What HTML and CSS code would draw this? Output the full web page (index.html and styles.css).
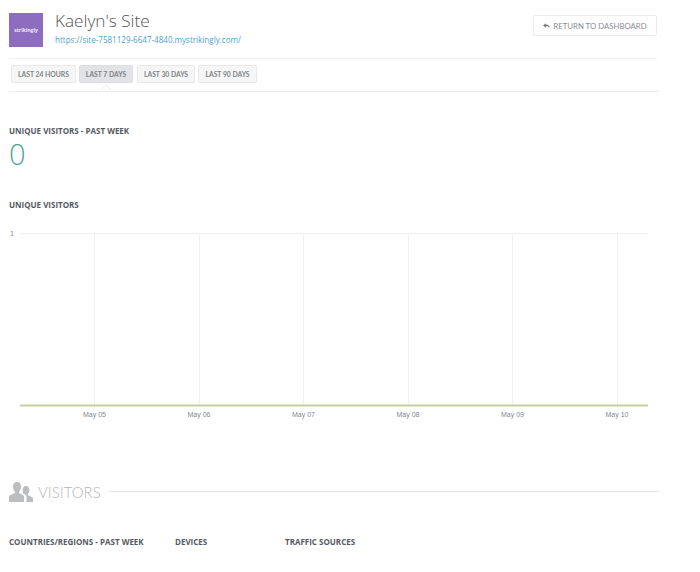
FILE: index.html
```html
<!DOCTYPE html>
<html lang="en">
<head>
    <meta charset="UTF-8">
    <title>Kaelyn's Site</title>
    <link rel="stylesheet" href="styles.css">
</head>
<body>
    <div class="container">
        <div class="site-header">
            <div class="logo">strikingly</div>
            <div class="site-info">
                <h1>Kaelyn's Site</h1>
                <a class="site-link" href="#">https://site-7581129-6647-4840.mystrikingly.com/</a>
            </div>
            <a class="return-btn" href="#">
                <svg class="return-icon" viewBox="0 0 10 8"><path d="M4 0 0 3.2 4 6.4V4.5c2.6 0 4.4.6 5.6 3C9.400 4.200 7.400 2 4 1.900z"/></svg>
                RETURN TO DASHBOARD
            </a>
        </div>

        <div class="tabs">
            <button class="tab tab-24">LAST 24 HOURS</button>
            <button class="tab tab-7 active">LAST 7 DAYS</button>
            <button class="tab tab-30">LAST 30 DAYS</button>
            <button class="tab tab-90">LAST 90 DAYS</button>
        </div>

        <h3 class="label label-week">UNIQUE VISITORS - PAST WEEK</h3>
        <div class="big-number">0</div>

        <h3 class="label label-chart">UNIQUE VISITORS</h3>
        <svg class="chart" width="650" height="200" viewBox="0 0 650 200">
            <text class="axis-y" x="10" y="15">1</text>
            <line class="grid" x1="20" y1="12.500" x2="648" y2="12.500"/>
            <line class="grid" x1="94.500" y1="12" x2="94.500" y2="184"/>
            <line class="grid" x1="199.500" y1="12" x2="199.500" y2="184"/>
            <line class="grid" x1="303.500" y1="12" x2="303.500" y2="184"/>
            <line class="grid" x1="408.500" y1="12" x2="408.500" y2="184"/>
            <line class="grid" x1="512.500" y1="12" x2="512.500" y2="184"/>
            <line class="grid" x1="617.500" y1="12" x2="617.500" y2="184"/>
            <line class="series" x1="20" y1="184.500" x2="648" y2="184.500"/>
            <text class="axis-x" x="94.500" y="196">May 05</text>
            <text class="axis-x" x="199" y="196">May 06</text>
            <text class="axis-x" x="303.500" y="196">May 07</text>
            <text class="axis-x" x="408" y="196">May 08</text>
            <text class="axis-x" x="512.500" y="196">May 09</text>
            <text class="axis-x" x="617" y="196">May 10</text>
        </svg>

        <div class="section-title">
            <svg class="visitors-icon" viewBox="0 0 24 20">
                <path d="M8 0c2.600 0 4 2 4 4.800 0 2-.8 3.800-1.900 4.800v1.500l4 2.200c.7.400 1 1 1 1.700V20H0v-5c0-.7.300-1.300 1-1.700l4.900-2.200V9.600C4.800 8.600 4 6.800 4 4.800 4 2 5.400 0 8 0z"/>
                <path d="M17 4c2.200 0 3.400 1.700 3.400 4 0 1.700-.6 3-1.500 3.900v1.300l4 1.700c.7.300 1.100.8 1.100 1.500V20h-6.500v-5c0-1.300-.6-2.200-1.700-2.800l-1.500-.8c-.4-1-.7-2.100-.7-3.400 0-2.300 1.200-4 3.400-4z"/>
            </svg>
            <span>VISITORS</span>
            <div class="section-line"></div>
        </div>

        <div class="columns">
            <h3 class="label col-countries">COUNTRIES/REGIONS - PAST WEEK</h3>
            <h3 class="label col-devices">DEVICES</h3>
            <h3 class="label col-traffic">TRAFFIC SOURCES</h3>
        </div>
    </div>
</body>
</html>
```

FILE: styles.css
```css
body {
    margin: 0;
    background: #fff;
    font-family: "Open Sans", sans-serif;
    color: #4b5058;
    overflow: hidden;
}

.container {
    width: 650px;
    height: 572px;
    padding-left: 9px;
}

.site-header {
    display: flex;
    align-items: flex-start;
    width: 648px;
    height: 45px;
    padding-top: 13px;
    border-bottom: 1px solid #f2f2f2;
}

.logo {
    width: 34px;
    height: 34px;
    background: #8e6cc0;
    color: #eee6f7;
    font-family: "Open Sans", sans-serif;
    font-size: 5px;
    font-weight: 700;
    line-height: 34px;
    text-align: center;
}

.site-info {
    margin-left: 12px;
    flex: 1;
}

h1 {
    margin: -5px 0 0;
    font-size: 17.200px;
    font-weight: 300;
    line-height: 25px;
    color: #555;
}

.site-link {
    display: block;
    margin-top: 1px;
    font-size: 8.050px;
    line-height: 12px;
    color: #4f9fd0;
    text-decoration: none;
}

.return-btn {
    display: flex;
    align-items: center;
    justify-content: center;
    gap: 3px;
    width: 122px;
    height: 19px;
    margin-top: 2px;
    border: 1px solid #ececec;
    border-radius: 2px;
    font-family: "Lato", sans-serif;
    font-size: 7.800px;
    color: #8a8d90;
    text-decoration: none;
}

.return-icon {
    width: 7px;
    height: 6px;
    fill: #77797c;
}

.tabs {
    display: flex;
    width: 650px;
    height: 33px;
    padding-top: 6px;
    box-sizing: border-box;
    border-bottom: 1px solid #ececec;
}

.tab {
    position: relative;
    height: 18px;
    padding: 0;
    margin-left: 3px;
    border: 1px solid #e9e9e9;
    border-radius: 2px;
    background: #f6f6f6;
    font-family: "Lato", sans-serif;
    font-size: 6.800px;
    font-weight: 700;
    color: #808285;
}

.tab-24 {
    width: 65px;
    margin-left: 2px;
}

.tab-7 {
    width: 54px;
}

.tab-30 {
    width: 58px;
    margin-left: 4px;
}

.tab-90 {
    width: 59px;
}

.tab.active {
    background: #e1e3e7;
    border-color: #dcdee2;
}

/* triangulito sobre la linea, debajo de la pestaña activa */
.tab.active::after {
    content: "";
    position: absolute;
    left: 22px;
    bottom: -12px;
    width: 7px;
    height: 7px;
    background: #fff;
    border-top: 1px solid #ececec;
    border-left: 1px solid #ececec;
    transform: rotate(45deg);
    clip-path: polygon(0 0, 100% 0, 0 100%);
}

.label {
    margin: 0;
    font-size: 8px;
    font-weight: 700;
    line-height: 12px;
    color: #555a62;
}

.label-week {
    padding-top: 33px;
}

.big-number {
    height: 30px;
    margin-top: 2px;
    font-size: 29px;
    font-weight: 300;
    line-height: 30px;
    color: #4fa595;
}

.label-chart {
    padding-top: 30px;
}

.chart {
    display: block;
    margin-top: 10px;
    margin-left: -9px;
}

.grid {
    stroke: #f0f0f0;
    stroke-width: 1;
}

.series {
    stroke: #c3d09b;
    stroke-width: 2;
}

.axis-y,
.axis-x {
    font-family: "Liberation Sans", sans-serif;
    font-size: 7px;
    fill: #85888c;
}

.axis-x {
    text-anchor: middle;
}

.section-title {
    display: flex;
    align-items: center;
    height: 22px;
    margin-top: 60px;
    font-family: "Lato", sans-serif;
    font-size: 15px;
    font-weight: 300;
    color: #b5b7b9;
}

.visitors-icon {
    width: 24px;
    height: 20px;
    fill: #bcbdbf;
    margin-right: 5px;
}

.section-line {
    flex: 1;
    height: 1px;
    margin-left: 8px;
    margin-top: -2px;
    background: #e3e3e3;
}

.columns {
    display: flex;
    padding-top: 33px;
}

.col-countries {
    width: 166px;
}

.col-devices {
    width: 110px;
}
```
